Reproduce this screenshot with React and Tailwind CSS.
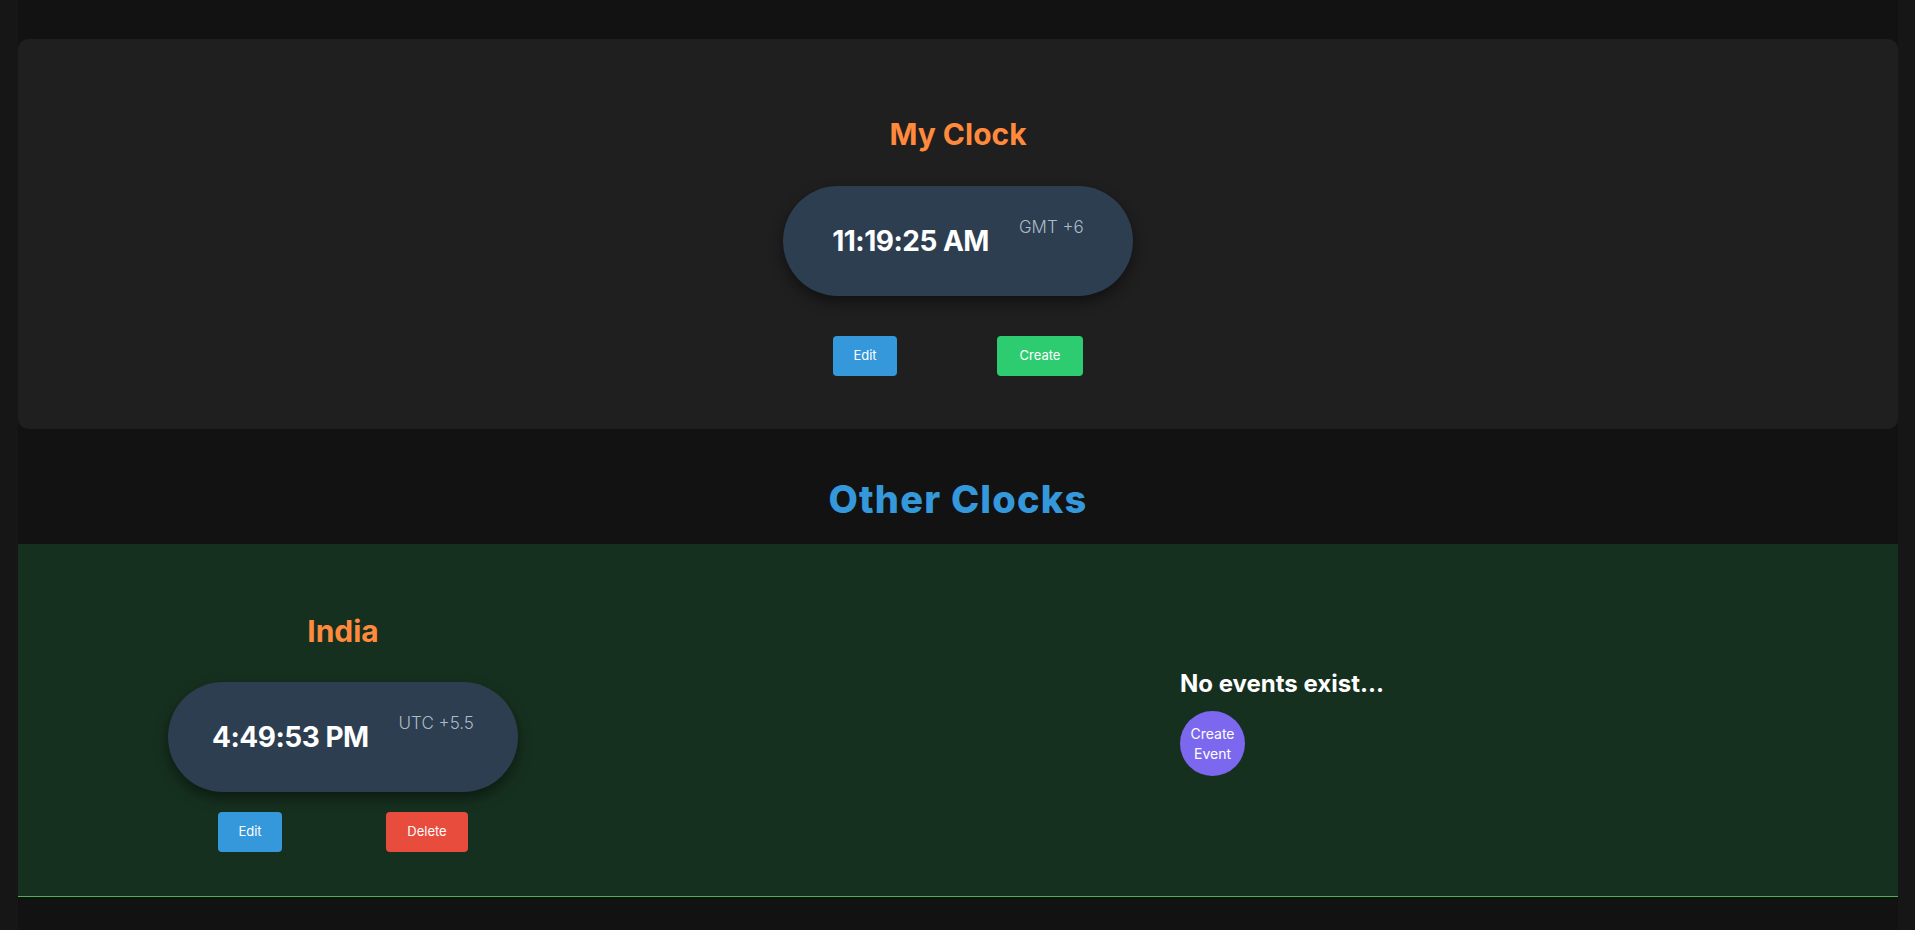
import { useState } from "react";

const ClockPill = ({ time, zone }) => (
  <div className="w-[350px] h-[110px] rounded-full bg-[#2c3e50] shadow-[0_6px_14px_rgba(0,0,0,0.45)] flex items-center justify-center gap-[30px]">
    <span className="text-white font-bold text-[28px] tracking-[-0.5px]">{time}</span>
    <span className="text-[#aebbc7] font-light text-[17px] mb-[26px]">{zone}</span>
  </div>
);

const Btn = ({ color, children }) => (
  <button className={`h-10 rounded text-[13px] text-white ${color}`}>{children}</button>
);

const App = () => {
  const [events] = useState([]);

  return (
    <div
      className="min-h-screen bg-[#161616] pl-[18px] pr-[17px]"
      style={{ fontFamily: "Inter, 'Noto Sans', sans-serif" }}
    >
      <div className="min-h-screen bg-[#121212] pt-[39px]">
        {/* MY CLOCK */}
        <section className="h-[390px] rounded-[10px] bg-[#1f1f1f] flex flex-col items-center pt-[77px]">
          <h2 className="text-[30px] leading-[36px] font-bold text-[#ff8a3d]">My Clock</h2>
          <div className="mt-[34px]">
            <ClockPill time="11:19:25 AM" zone="GMT +6" />
          </div>
          <div className="mt-[40px] flex gap-[100px]">
            <Btn color="w-[64px] bg-[#3498db]">Edit</Btn>
            <Btn color="w-[86px] bg-[#2ecc71]">Create</Btn>
          </div>
        </section>

        {/* OTHER CLOCKS */}
        <h1 className="mt-[47px] text-center text-[38px] leading-[46px] font-extrabold tracking-[1.2px] text-[#3498db]">
          Other Clocks
        </h1>

        <section className="mt-[22px] h-[353px] bg-[#16301f] border-b border-[#4caf50] flex items-start pt-[69px]">
          <div className="w-[650px] flex flex-col items-center">
            <h2 className="text-[30px] leading-[36px] font-bold text-[#ff8a3d]">India</h2>
            <div className="mt-[33px]">
              <ClockPill time="4:49:53 PM" zone="UTC +5.5" />
            </div>
            <div className="mt-[20px] flex gap-[104px]">
              <Btn color="w-[64px] bg-[#3498db]">Edit</Btn>
              <Btn color="w-[82px] bg-[#e74c3c]">Delete</Btn>
            </div>
          </div>

          <div className="ml-[512px] mt-[56px] flex flex-col items-start">
            {events.length === 0 && (
              <h3 className="text-[24px] leading-[29px] font-bold text-white">No events exist...</h3>
            )}
            <button className="mt-[13px] w-[65px] h-[65px] rounded-full bg-[#7b68ee] text-white text-[14px] leading-[20px]">
              Create
              <br />
              Event
            </button>
          </div>
        </section>
      </div>
    </div>
  );
};

export default App;
